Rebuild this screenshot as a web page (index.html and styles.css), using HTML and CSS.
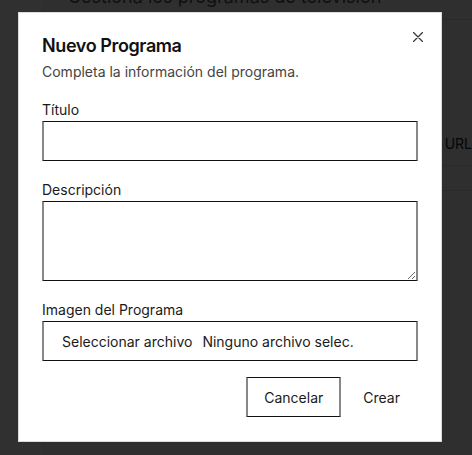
FILE: index.html
```html
<!DOCTYPE html>
<html lang="es">
<head>
<meta charset="utf-8">
<title>Nuevo Programa</title>
<link rel="stylesheet" href="styles.css">
</head>
<body>
<div class="page">
  <aside class="sidebar"></aside>
  <main class="main">
    <div class="page-head">
      <p class="page-sub">Gestiona los programas de televisión</p>
    </div>
    <div class="table">
      <div class="tr th">
        <div class="cell"></div>
        <div class="cell">URL</div>
      </div>
      <div class="tr">
        <div class="cell"></div>
        <div class="cell"></div>
      </div>
    </div>
  </main>
</div>

<div class="overlay">
  <div class="modal" role="dialog">
    <button class="close" aria-label="Cerrar">
      <svg width="10" height="10" viewBox="0 0 10 10"><path d="M0.5 0.5 L9.5 9.5 M9.5 0.5 L0.5 9.5" stroke="#3a3a3a" stroke-width="1.3" fill="none" stroke-linecap="round"/></svg>
    </button>
    <div class="head">
      <h2 class="title">Nuevo Programa</h2>
      <p class="desc">Completa la información del programa.</p>
    </div>
    <form class="form">
      <div class="field">
        <label class="label">Título</label>
        <input class="input" type="text">
      </div>
      <div class="field">
        <label class="label">Descripción</label>
        <textarea class="input textarea"></textarea>
      </div>
      <div class="field">
        <label class="label">Imagen del Programa</label>
        <div class="input file">
          <span class="file-btn">Seleccionar archivo</span>
          <span class="file-name">Ninguno archivo selec.</span>
        </div>
      </div>
      <div class="actions">
        <button type="button" class="btn btn-outline">Cancelar</button>
        <button type="button" class="btn btn-plain">Crear</button>
      </div>
    </form>
  </div>
</div>
</body>
</html>
```

FILE: styles.css
```css
* { box-sizing: border-box; }
html, body { margin: 0; padding: 0; }
body {
  font-family: Inter, "Noto Sans", sans-serif;
  background: #ffffff;
  color: #111;
  width: 472px;
  height: 455px;
  overflow: hidden;
}
.page { display: flex; height: 455px; }
.sidebar { width: 46px; background: #fcfcfc; border-right: 1px solid #eeeeee; }
.main { flex: 1; background: #f7f7f7; }
.page-head {
  height: 33px;
  border-bottom: 1px solid #e0e0e0;
  padding-left: 24px;
}
.page-sub {
  margin: -13px 0 0;
  font-size: 18px;
  line-height: 20px;
  color: #555;
}
.table { margin-top: 102px; }
.tr {
  display: grid;
  grid-template-columns: 401px 1fr;
  border-bottom: 1px solid #e0e0e0;
  height: 25px;
}
.tr.th { height: 44px; align-items: center; }
.cell { font-size: 14px; color: #222; }

.overlay {
  position: fixed;
  inset: 0;
  background: rgba(0, 0, 0, 0.81);
  display: flex;
  align-items: flex-start;
  padding: 12px 0 0 18px;
}
.modal {
  position: relative;
  width: 424px;
  background: #fff;
  border: 1px solid #dcdcdc;
  padding: 23px 23px 24px;
}
.close {
  position: absolute;
  top: 19px;
  right: 18px;
  width: 10px;
  height: 10px;
  padding: 0;
  border: 0;
  background: none;
  display: flex;
}
.head { display: flex; flex-direction: column; gap: 6px; }
.title {
  margin: 0;
  font-size: 18px;
  line-height: 20px;
  font-weight: 600;
  letter-spacing: -0.4px;
  color: #111;
}
.desc {
  margin: 0;
  font-size: 14px;
  line-height: 20px;
  color: #444;
}
.form {
  margin-top: 18px;
  display: flex;
  flex-direction: column;
  gap: 19px;
}
.field { display: flex; flex-direction: column; gap: 1px; }
.label {
  font-size: 14px;
  line-height: 20px;
  color: #1a1a1a;
}
.input {
  display: block;
  width: 100%;
  height: 40px;
  border-style: solid;
  border-width: 1px 2px;
  border-color: #111 #888;
  background: #fff;
  font-family: inherit;
  font-size: 14px;
  padding: 0 12px;
  outline: none;
  margin: 0;
}
.textarea { height: 80px; padding: 8px 12px; resize: vertical; }
.file {
  display: flex;
  align-items: center;
  padding: 0 18px;
  gap: 10px;
  color: #1a1a1a;
}
.actions {
  margin-top: -3px;
  display: flex;
  justify-content: flex-end;
  gap: 4px;
}
.btn {
  height: 40px;
  padding: 0 16px;
  font-family: inherit;
  font-size: 14px;
  color: #1a1a1a;
  background: #fff;
  border-style: solid;
  border-width: 1px 2px;
  border-color: #111 #888;
  margin: 0;
}
.btn-plain { border-color: transparent; }
```
